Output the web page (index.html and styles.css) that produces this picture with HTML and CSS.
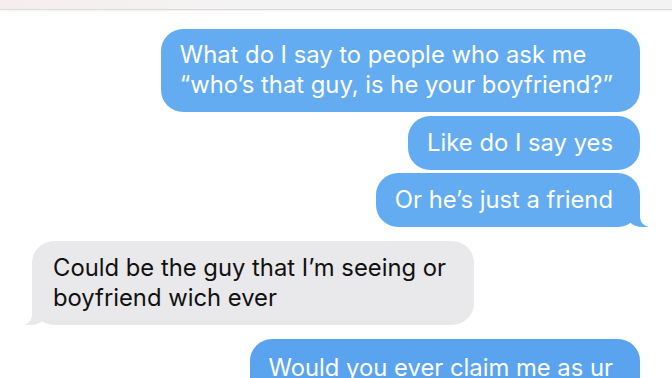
FILE: index.html
```html
<!DOCTYPE html>
<html lang="en">
<head>
  <meta charset="UTF-8" />
  <title>Messages</title>
  <link rel="stylesheet" href="styles.css">
</head>
<body>
  <div class="topbar"></div>
  <div class="thread">
    <div class="msg sent first">What do I say to people who ask me<br>“who’s that guy, is he your boyfriend?”</div>
    <div class="msg sent">Like do I say yes</div>
    <div class="msg sent tail">Or he’s just a friend</div>
    <div class="msg received tail">Could be the guy that I’m seeing or<br>boyfriend wich ever</div>
    <div class="msg sent last">Would you ever claim me as ur</div>
  </div>
</body>
</html>
```

FILE: styles.css
```css
body {
  margin: 0;
  background: #fff;
  font-family: Inter, "Noto Sans", sans-serif;
  overflow: hidden;
  height: 378px;
}
.topbar {
  height: 9px;
  background: linear-gradient(to right, #f6eeee, #f3f3f3 40%);
  border-bottom: 1px solid #dadada;
  box-shadow: 0 1px 2px rgba(0, 0, 0, 0.06);
}
.thread {
  display: flex;
  flex-direction: column;
  padding: 19px 32px 0 32px;
}
.msg {
  position: relative;
  font-size: 23.8px;
  line-height: 30px;
  border-radius: 22px;
  padding: 12px 27px 12px 19px;
  margin-bottom: 3px;
  max-width: 520px;
  white-space: nowrap;
}
.sent {
  align-self: flex-end;
  background: #63acf1;
  color: #fff;
}
.sent.first {
  padding-top: 11px;
  padding-bottom: 12px;
  margin-bottom: 4px;
}
.sent.last {
  background: #5aa3ef;
  margin-top: 11px;
  padding-top: 14px;
  padding-bottom: 20px;
}
.received {
  align-self: flex-start;
  background: #e9e9eb;
  color: #111;
  margin-top: 11px;
  padding: 12px 28px 12px 21px;
}
/* bubble tails */
.tail::before,
.tail::after {
  content: "";
  position: absolute;
  bottom: 0;
  height: 22px;
}
.sent.tail::before {
  right: -8px;
  width: 22px;
  background: #63acf1;
  border-bottom-left-radius: 16px 14px;
}
.sent.tail::after {
  right: -10px;
  width: 10px;
  background: #fff;
  border-bottom-left-radius: 10px;
}
.received.tail::before {
  left: -7px;
  width: 22px;
  background: #e9e9eb;
  border-bottom-right-radius: 16px 14px;
}
.received.tail::after {
  left: -10px;
  width: 10px;
  background: #fff;
  border-bottom-right-radius: 10px;
}
```
